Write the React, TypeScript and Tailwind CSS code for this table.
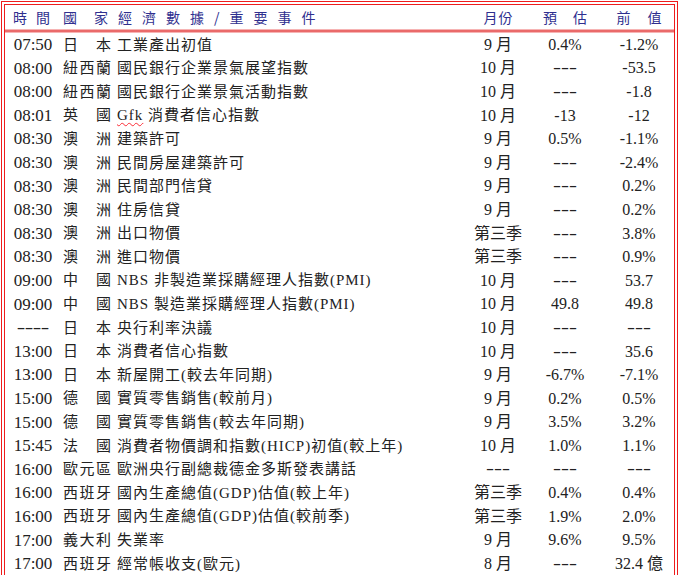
import React from 'react';

type Row = {
  time: string;
  country: string;
  event: React.ReactNode;
  month: string;
  forecast: string;
  previous: string;
};

const rows: Row[] = [
  { time: '07:50', country: '日本', event: '工業產出初值', month: '9 月', forecast: '0.4%', previous: '-1.2%' },
  { time: '08:00', country: '紐西蘭', event: '國民銀行企業景氣展望指數', month: '10 月', forecast: '---', previous: '-53.5' },
  { time: '08:00', country: '紐西蘭', event: '國民銀行企業景氣活動指數', month: '10 月', forecast: '---', previous: '-1.8' },
  {
    time: '08:01',
    country: '英國',
    event: (
      <>
        <span className="underline decoration-wavy decoration-red-500 decoration-1 underline-offset-2">Gfk</span> 消費者信心指數
      </>
    ),
    month: '10 月',
    forecast: '-13',
    previous: '-12',
  },
  { time: '08:30', country: '澳洲', event: '建築許可', month: '9 月', forecast: '0.5%', previous: '-1.1%' },
  { time: '08:30', country: '澳洲', event: '民間房屋建築許可', month: '9 月', forecast: '---', previous: '-2.4%' },
  { time: '08:30', country: '澳洲', event: '民間部門信貸', month: '9 月', forecast: '---', previous: '0.2%' },
  { time: '08:30', country: '澳洲', event: '住房信貸', month: '9 月', forecast: '---', previous: '0.2%' },
  { time: '08:30', country: '澳洲', event: '出口物價', month: '第三季', forecast: '---', previous: '3.8%' },
  { time: '08:30', country: '澳洲', event: '進口物價', month: '第三季', forecast: '---', previous: '0.9%' },
  { time: '09:00', country: '中國', event: 'NBS 非製造業採購經理人指數(PMI)', month: '10 月', forecast: '---', previous: '53.7' },
  { time: '09:00', country: '中國', event: 'NBS 製造業採購經理人指數(PMI)', month: '10 月', forecast: '49.8', previous: '49.8' },
  { time: '----', country: '日本', event: '央行利率決議', month: '10 月', forecast: '---', previous: '---' },
  { time: '13:00', country: '日本', event: '消費者信心指數', month: '10 月', forecast: '---', previous: '35.6' },
  { time: '13:00', country: '日本', event: '新屋開工(較去年同期)', month: '9 月', forecast: '-6.7%', previous: '-7.1%' },
  { time: '15:00', country: '德國', event: '實質零售銷售(較前月)', month: '9 月', forecast: '0.2%', previous: '0.5%' },
  { time: '15:00', country: '德國', event: '實質零售銷售(較去年同期)', month: '9 月', forecast: '3.5%', previous: '3.2%' },
  { time: '15:45', country: '法國', event: '消費者物價調和指數(HICP)初值(較上年)', month: '10 月', forecast: '1.0%', previous: '1.1%' },
  { time: '16:00', country: '歐元區', event: '歐洲央行副總裁德金多斯發表講話', month: '---', forecast: '---', previous: '---' },
  { time: '16:00', country: '西班牙', event: '國內生產總值(GDP)估值(較上年)', month: '第三季', forecast: '0.4%', previous: '0.4%' },
  { time: '16:00', country: '西班牙', event: '國內生產總值(GDP)估值(較前季)', month: '第三季', forecast: '1.9%', previous: '2.0%' },
  { time: '17:00', country: '義大利', event: '失業率', month: '9 月', forecast: '9.6%', previous: '9.5%' },
  { time: '17:00', country: '西班牙', event: '經常帳收支(歐元)', month: '8 月', forecast: '---', previous: '32.4 億' },
];

const font = "font-['Liberation_Serif','Noto_Sans_CJK_TC',serif]";

// dashes are drawn wide, like the half-width hyphens of the original
function Num({ value }: { value: string }) {
  if (/^-+$/.test(value)) {
    return (
      <span className="inline-flex">
        {value.split('').map((c, i) => (
          <span key={i} className="inline-block w-[8px] text-center scale-x-[1.5]">
            {c}
          </span>
        ))}
      </span>
    );
  }
  return <span>{value}</span>;
}

function Country({ name }: { name: string }) {
  return (
    <div className="w-[48px] flex justify-between">
      {name.split('').map((c, i) => (
        <span key={i}>{c}</span>
      ))}
    </div>
  );
}

function Spread({ text, gap }: { text: string; gap: string }) {
  return (
    <div className={`flex justify-center whitespace-nowrap ${gap}`}>
      {text.split('').map((c, i) => (
        <span key={i}>{c}</span>
      ))}
    </div>
  );
}

export default function App() {
  return (
    <div className={`h-screen overflow-hidden bg-white ${font}`}>
      <div className="ml-[1px] mr-[2px] mt-[1px] border border-[#ee1c1c] border-b-0 px-[2px] pt-[2px]">
        <div className="border border-[#ee1c1c] border-b-0 min-h-[600px]">
          {/* Header */}
          <div className="h-[24px] flex items-center text-[14px] text-[#2f2f8f] font-['Noto_Sans_CJK_TC',sans-serif]">
            <div className="w-[58px] pl-[8px] tracking-[9px] whitespace-nowrap">時間</div>
            <div className="flex-1 whitespace-nowrap tracking-[10px]">
              <span className="mr-[7px]">國</span>家經濟數據/重要事件
            </div>
            <div className="w-[56px]">
              <Spread text="月份" gap="gap-[1px]" />
            </div>
            <div className="w-[78px]">
              <Spread text="預估" gap="gap-[16px]" />
            </div>
            <div className="w-[70px]">
              <Spread text="前值" gap="gap-[17px]" />
            </div>
          </div>
          <div className="h-[1px] bg-[#f6b4b4]" />
          <div className="h-[2px] bg-[#ea6a6a]" />
          <div className="h-[1px] bg-[#f6b4b4]" />

          {/* Rows */}
          {rows.map((r, i) => (
            <div key={i} className="h-[23.6px] flex items-center text-[#222] whitespace-nowrap">
              <div className="w-[58px] pl-[8px] pr-[10px] text-center text-[17px]">
                <Num value={r.time} />
              </div>
              <div className="w-[54px] text-[15px]">
                <Country name={r.country} />
              </div>
              <div className="flex-1 text-[15px] tracking-[1px]">{r.event}</div>
              <div className="w-[56px] text-center text-[16px]">
                <Num value={r.month} />
              </div>
              <div className="w-[78px] text-center text-[16px]">
                <Num value={r.forecast} />
              </div>
              <div className="w-[70px] text-center text-[16px]">
                <Num value={r.previous} />
              </div>
            </div>
          ))}
        </div>
      </div>
    </div>
  );
}
